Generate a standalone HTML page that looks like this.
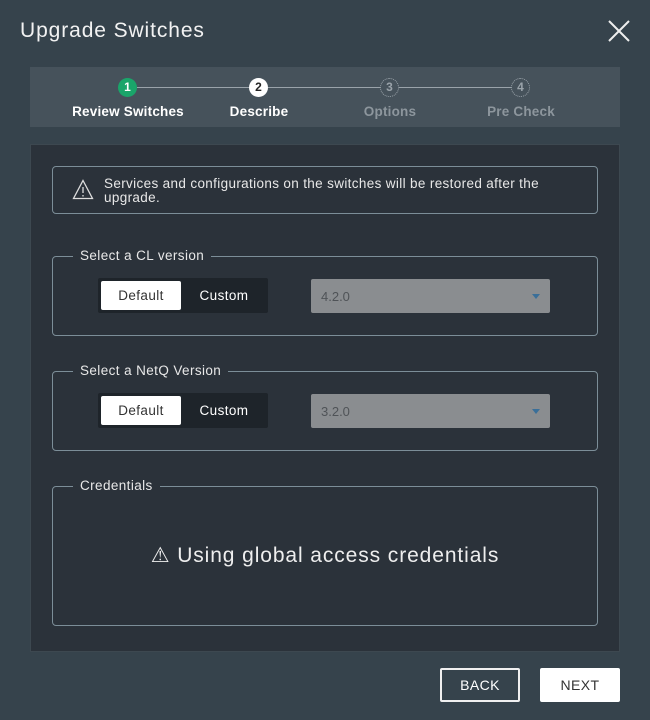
<!DOCTYPE html>
<html><head><style>
*{box-sizing:border-box;margin:0;padding:0}
body{width:650px;height:720px;background:#36434c;font-family:"Liberation Sans",sans-serif;color:#fff;position:relative;overflow:hidden}
.abs{position:absolute}
.title{left:20px;top:19px;font-size:21px;color:#f2f2f2;letter-spacing:0.9px}
.step{top:67px;left:30px;width:590px;height:60px;background:#46525b}
.line{position:absolute;top:87px;height:1px;background:#9aa3aa}
.c{position:absolute;width:19px;height:19px;border-radius:50%;top:78px;font-size:12px;font-weight:bold;text-align:center;line-height:19px}
.lbl{position:absolute;top:104px;font-size:13.5px;font-weight:bold;width:140px;text-align:center;letter-spacing:0.2px}
.panel{left:30px;top:144px;width:590px;height:508px;background:#2b323a;border:1px solid #3d4850}
.box{position:absolute;border:1px solid #7c8e98;border-radius:4px}
.leg{position:absolute;background:#2b323a;padding:0 7px;font-size:13.5px;color:#e8e8e8;letter-spacing:0.4px}
.tg{position:absolute;width:170px;height:35px;background:#1e242a;border-radius:2px}
.tg .d{position:absolute;left:3px;top:3px;width:80px;height:29px;background:#fff;color:#333;font-size:13.5px;text-align:center;line-height:29px;border-radius:2px;letter-spacing:0.4px}
.tg .u{position:absolute;left:86px;top:3px;width:80px;height:29px;color:#fff;font-size:13.5px;text-align:center;line-height:29px;letter-spacing:0.4px}
.dd{position:absolute;width:239px;height:34px;background:#8a8d90;border-radius:2px;color:#4f5357;font-size:13px;padding-left:10px;line-height:36px}
.dd:after{content:"";position:absolute;right:10px;top:15px;border:4px solid transparent;border-top:5px solid #3a6f99}
.btn{position:absolute;top:668px;width:80px;height:34px;font-size:14px;text-align:center;line-height:34px;border-radius:2px;letter-spacing:0.4px}
</style></head><body>
<div class="abs title">Upgrade Switches</div>
<svg class="abs" style="left:608px;top:20px" width="22" height="22"><path d="M1 1L21 21M21 1L1 21" stroke="#eee" stroke-width="2"/></svg>
<div class="abs step"></div>
<div class="line" style="left:137px;width:112px"></div>
<div class="line" style="left:268px;width:112px"></div>
<div class="line" style="left:399px;width:112px"></div>
<div class="c" style="left:118px;background:#1aa56a;color:#fff">1</div>
<div class="c" style="left:249px;background:#fff;color:#222">2</div>
<div class="c" style="left:380px;border:1px dotted #9aa3aa;color:#9aa3aa;line-height:17px">3</div>
<div class="c" style="left:511px;border:1px dotted #9aa3aa;color:#9aa3aa;line-height:17px">4</div>
<div class="lbl" style="left:58px">Review Switches</div>
<div class="lbl" style="left:189px">Describe</div>
<div class="lbl" style="left:320px;color:#8d969d">Options</div>
<div class="lbl" style="left:451px;color:#8d969d">Pre Check</div>
<div class="abs panel"></div>
<div class="box" style="left:52px;top:166px;width:546px;height:48px"></div>
<svg class="abs" style="left:72px;top:179px" width="22" height="21"><path d="M11 1.5L20.5 19.5H1.5Z" fill="none" stroke="#ddd" stroke-width="1.3"/><path d="M11 8V14M11 16V17.5" stroke="#ddd" stroke-width="1.3"/></svg>
<div class="abs" style="left:104px;top:177px;font-size:13.5px;line-height:14px;color:#e8e8e8;width:455px;letter-spacing:0.35px">Services and configurations on the switches will be restored after the upgrade.</div>
<div class="box" style="left:52px;top:256px;width:546px;height:80px"></div>
<div class="leg" style="left:73px;top:248px">Select a CL version</div>
<div class="tg" style="left:98px;top:278px"><div class="d">Default</div><div class="u">Custom</div></div>
<div class="dd" style="left:311px;top:279px">4.2.0</div>
<div class="box" style="left:52px;top:371px;width:546px;height:80px"></div>
<div class="leg" style="left:73px;top:363px">Select a NetQ Version</div>
<div class="tg" style="left:98px;top:393px"><div class="d">Default</div><div class="u">Custom</div></div>
<div class="dd" style="left:311px;top:394px">3.2.0</div>
<div class="box" style="left:52px;top:486px;width:546px;height:140px"></div>
<div class="leg" style="left:73px;top:478px">Credentials</div>
<div class="abs" style="left:52px;top:543px;width:546px;text-align:center;font-size:21px;color:#eee;letter-spacing:0.9px">⚠ Using global access credentials</div>
<div class="btn" style="left:440px;border:2px solid #f0f0f0;color:#fff;line-height:31px">BACK</div>
<div class="btn" style="left:540px;background:#fff;color:#333">NEXT</div>
</body></html>
